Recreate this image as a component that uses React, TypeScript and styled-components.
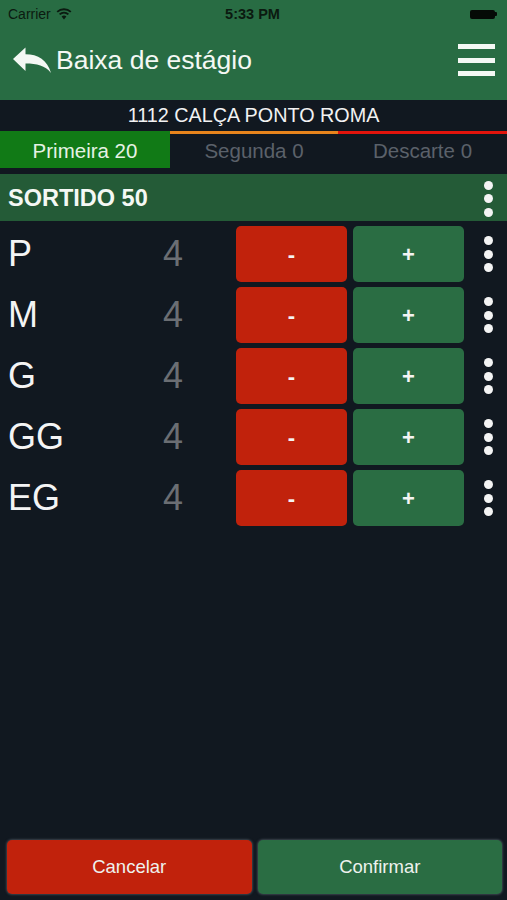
import React from "react";
import styled, { createGlobalStyle } from "styled-components";

const Global = createGlobalStyle`
  html, body { margin: 0; padding: 0; background: #111820; }
  body { font-family: "Liberation Sans", Arial, sans-serif; }
  * { box-sizing: border-box; }
`;

const Page = styled.div`
  width: 507px;
  height: 900px;
  display: flex;
  flex-direction: column;
  background: #111820;
  overflow: hidden;
`;

const Header = styled.header`
  background: #286c43;
  height: 100px;
  display: flex;
  flex-direction: column;
`;

const StatusBar = styled.div`
  height: 28px;
  display: grid;
  grid-template-columns: 1fr auto 1fr;
  align-items: center;
  padding: 0 10px 0 8px;
  color: #0b1a10;
  font-size: 14px;
`;

const Carrier = styled.div`
  display: flex;
  align-items: center;
  gap: 5px;
`;

const Clock = styled.div`
  font-weight: bold;
  font-size: 14.5px;
`;

const Battery = styled.div`
  justify-self: end;
  display: flex;
  align-items: center;
`;

const BatteryBody = styled.div`
  width: 25px;
  height: 9px;
  background: #050a06;
  border-radius: 2px;
`;

const BatteryTip = styled.div`
  width: 2px;
  height: 4px;
  background: #050a06;
  border-radius: 0 1px 1px 0;
`;

const NavBar = styled.div`
  flex: 1;
  display: flex;
  align-items: center;
  justify-content: space-between;
  padding: 0 12px 8px 13px;
`;

const BackGroup = styled.div`
  display: flex;
  align-items: center;
  gap: 5px;
  color: #f4f8f4;
`;

const Title = styled.h1`
  margin: 0;
  font-weight: normal;
  font-size: 26.5px;
  color: #f4f8f4;
`;

const Burger = styled.div`
  display: flex;
  flex-direction: column;
  gap: 8.5px;
`;

const BurgerBar = styled.div`
  width: 37px;
  height: 5px;
  background: #f4f8f4;
`;

const ProductTitle = styled.div`
  height: 31px;
  display: flex;
  align-items: center;
  justify-content: center;
  color: #f2f2f2;
  font-size: 19.8px;
`;

const Tabs = styled.div`
  display: grid;
  grid-template-columns: 170px 168px 169px;
  height: 37px;
`;

const Tab = styled.div<{ $active?: boolean; $line?: string }>`
  display: flex;
  align-items: center;
  justify-content: center;
  font-size: 20.5px;
  background: ${(p) => (p.$active ? "#117a16" : "transparent")};
  color: ${(p) => (p.$active ? "#e6f2e4" : "#5b616a")};
  border-top: 3px solid ${(p) => p.$line ?? "#117a16"};
`;

const GroupHeader = styled.div`
  margin-top: 6px;
  height: 47px;
  background: #245b37;
  display: flex;
  align-items: center;
  justify-content: space-between;
  padding: 2px 0 0 8px;
`;

const GroupTitle = styled.div`
  color: #f4f8f4;
  font-weight: bold;
  font-size: 23.5px;
`;

const DotsCell = styled.div`
  width: 37px;
  display: flex;
  flex-direction: column;
  align-items: center;
  gap: 4.5px;
`;

const Dot = styled.div`
  width: 9px;
  height: 9px;
  border-radius: 50%;
  background: #f4f4f4;
`;

const List = styled.div`
  flex: 1;
  display: flex;
  flex-direction: column;
`;

const Row = styled.div`
  height: 61px;
  padding-top: 5px;
  display: grid;
  grid-template-columns: 150px 46px 40px 111px 6px 111px 6px 37px;
  align-items: center;
`;

const SizeLabel = styled.div`
  padding-left: 8px;
  color: #f4f4f4;
  font-size: 36px;
`;

const Count = styled.div`
  text-align: center;
  color: #6b6e73;
  font-size: 36px;
`;

const StepButton = styled.button<{ $kind: "minus" | "plus" }>`
  grid-column: ${(p) => (p.$kind === "minus" ? 4 : 6)};
  height: 56px;
  border: none;
  border-radius: 5px;
  background: ${(p) => (p.$kind === "minus" ? "#c1220c" : "#2a6d43")};
  color: #f4f4f4;
  font-family: "Liberation Sans", Arial, sans-serif;
  font-size: 22px;
  font-weight: bold;
  padding: 2px 0 0;
`;

const RowDots = styled(DotsCell)`
  grid-column: 8;
`;

const Footer = styled.div`
  display: grid;
  grid-template-columns: 1fr 1fr;
  gap: 6px;
  padding: 0 5px 6px 7px;
`;

const FooterButton = styled.button<{ $kind: "cancel" | "confirm" }>`
  height: 54px;
  border: none;
  border-radius: 5px;
  background: ${(p) => (p.$kind === "cancel" ? "#c1220c" : "#2a6d43")};
  color: #eef2ee;
  font-family: "Liberation Sans", Arial, sans-serif;
  font-size: 18.5px;
  box-shadow: 0 0 2px 1px rgba(90, 100, 110, 0.55);
`;

const WifiIcon = () => (
  <svg width="16" height="12" viewBox="0 0 16 12">
    <path d="M8 11.5 L5.6 8.6 A3.6 3.6 0 0 1 10.4 8.6 Z" fill="#0b1a10" />
    <path d="M3.6 6.4 A6.6 6.6 0 0 1 12.4 6.4" stroke="#0b1a10" strokeWidth="1.9" fill="none" />
    <path d="M1.2 3.9 A10 10 0 0 1 14.8 3.9" stroke="#0b1a10" strokeWidth="1.9" fill="none" />
  </svg>
);

const BackArrow = () => (
  <svg width="38" height="26" viewBox="0 0 38 26">
    <path
      d="M0 12 L12.5 0.5 L12.5 7.2 C25 7.2 34.5 13 38 26 C32 18.5 24 16.6 12.5 16.6 L12.5 24 Z"
      fill="#f4f8f4"
    />
  </svg>
);

const Dots = () => (
  <>
    <Dot />
    <Dot />
    <Dot />
  </>
);

const sizes = ["P", "M", "G", "GG", "EG"];

export default function App() {
  return (
    <>
      <Global />
      <Page>
        <Header>
          <StatusBar>
            <Carrier>
              Carrier <WifiIcon />
            </Carrier>
            <Clock>5:33 PM</Clock>
            <Battery>
              <BatteryBody />
              <BatteryTip />
            </Battery>
          </StatusBar>
          <NavBar>
            <BackGroup>
              <BackArrow />
              <Title>Baixa de estágio</Title>
            </BackGroup>
            <Burger>
              <BurgerBar />
              <BurgerBar />
              <BurgerBar />
            </Burger>
          </NavBar>
        </Header>
        <ProductTitle>1112 CALÇA PONTO ROMA</ProductTitle>
        <Tabs>
          <Tab $active>Primeira 20</Tab>
          <Tab $line="#e8841c">Segunda 0</Tab>
          <Tab $line="#e2140c">Descarte 0</Tab>
        </Tabs>
        <GroupHeader>
          <GroupTitle>SORTIDO 50</GroupTitle>
          <DotsCell>
            <Dots />
          </DotsCell>
        </GroupHeader>
        <List>
          {sizes.map((s) => (
            <Row key={s}>
              <SizeLabel>{s}</SizeLabel>
              <Count>4</Count>
              <StepButton $kind="minus">-</StepButton>
              <StepButton $kind="plus">+</StepButton>
              <RowDots>
                <Dots />
              </RowDots>
            </Row>
          ))}
        </List>
        <Footer>
          <FooterButton $kind="cancel">Cancelar</FooterButton>
          <FooterButton $kind="confirm">Confirmar</FooterButton>
        </Footer>
      </Page>
    </>
  );
}
